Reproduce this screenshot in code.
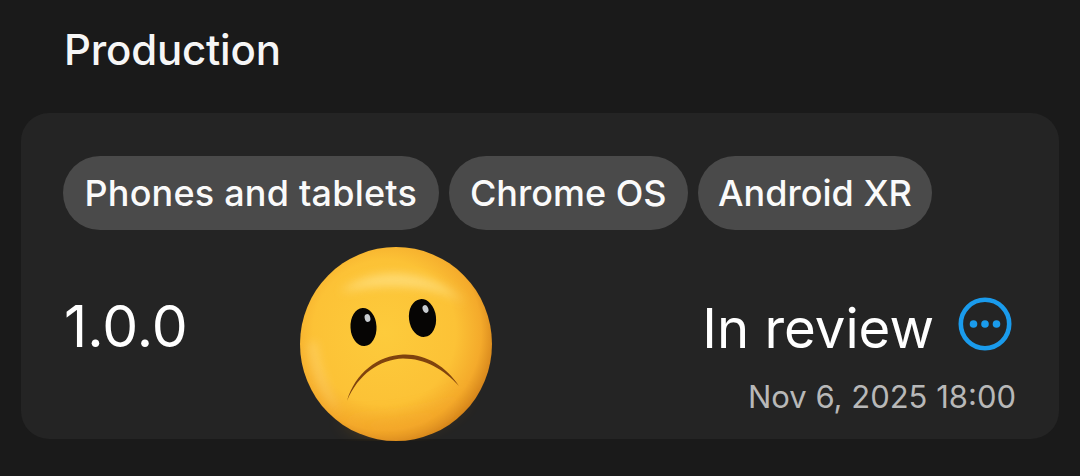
<div class="page">
  <h1 class="title">Production</h1>
  <section class="card">
    <div class="chips">
      <span class="chip chip-a">Phones and tablets</span>
      <span class="chip chip-b">Chrome OS</span>
      <span class="chip chip-c">Android XR</span>
    </div>
    <div class="row">
      <span class="version">1.0.0</span>
      <div class="status">
        <div class="status-line">
          <span class="status-text">In review</span>
          <svg class="dots" viewBox="0 0 54 54" width="54" height="54" aria-hidden="true">
            <circle cx="27" cy="27" r="24.2" fill="none" stroke="#1a9bec" stroke-width="4.6" />
            <circle cx="15.5" cy="27" r="3.8" fill="#1a9bec" />
            <circle cx="27" cy="27" r="3.8" fill="#1a9bec" />
            <circle cx="38.5" cy="27" r="3.8" fill="#1a9bec" />
          </svg>
        </div>
        <span class="date">Nov 6, 2025 18:00</span>
      </div>
    </div>
    <svg class="emoji" viewBox="0 0 194 194" width="194" height="194" aria-hidden="true">
      <defs>
        <radialGradient id="face" cx="44%" cy="44%" r="60%">
          <stop offset="0" stop-color="#fdcb3c" />
          <stop offset="0.62" stop-color="#fcc236" />
          <stop offset="0.84" stop-color="#f4aa2b" />
          <stop offset="1" stop-color="#cf7d18" />
        </radialGradient>
        <filter id="soft" x="-30%" y="-30%" width="160%" height="160%">
          <feGaussianBlur stdDeviation="5" />
        </filter>
        <filter id="softer" x="-30%" y="-30%" width="160%" height="160%">
          <feGaussianBlur stdDeviation="9" />
        </filter>
      </defs>
      <ellipse cx="96" cy="97" rx="96" ry="97" fill="url(#face)" />
      <path d="M40 45 C70 20 125 18 165 55 C130 36 80 36 40 45Z" fill="#ffe48c" opacity="0.7" filter="url(#soft)" />
      <path d="M8 95 C10 125 22 150 40 166 C30 145 20 122 17 95Z" fill="#ffdd95" opacity="0.35" filter="url(#soft)" />
      <path d="M40 172 C75 192 130 190 170 145 C140 168 85 178 40 172Z" fill="#f19f20" opacity="0.5" filter="url(#softer)" />
      <ellipse cx="63.500" cy="80" rx="13" ry="19" transform="rotate(-3 63.500 80)" fill="#060504" />
      <ellipse cx="67.500" cy="71" rx="2.800" ry="4" transform="rotate(-15 67.500 71)" fill="#c8ccd0" />
      <ellipse cx="122.500" cy="71" rx="13.500" ry="19" transform="rotate(-7 122.500 71)" fill="#060504" />
      <ellipse cx="125.500" cy="62" rx="2.800" ry="4" transform="rotate(-20 125.500 62)" fill="#c8ccd0" />
      <path d="M47 154 C55 126 78 108.500 103 107.500 C125 106.500 146 119 159 139 C144 122.500 125 111.500 103 111.500 C80 112.500 58 127 47 154Z" fill="#7f430e" />
    </svg>
  </section>
</div>

<style>
  :global(body) {
    margin: 0;
    background: #1a1a1a;
  }

  .page {
    height: 476px;
    padding: 22px 21px 0;
    box-sizing: border-box;
    font-family: Inter, Roboto, sans-serif;
    color: #fff;
    overflow: hidden;
  }

  .title {
    margin: 0 0 37px 43px;
    font-size: 42px;
    line-height: 55px;
    height: 54px;
    font-weight: 500;
    color: #f6f6f6;
    letter-spacing: -0.2px;
  }

  .card {
    position: relative;
    height: 326px;
    padding: 43px 42px 0;
    box-sizing: border-box;
    background: #242424;
    border-radius: 28px;
  }

  .chips {
    display: flex;
    gap: 10.5px;
  }

  .chip {
    height: 74px;
    display: flex;
    align-items: center;
    justify-content: center;
    border-radius: 37px;
    background: #4a4a4a;
    box-sizing: border-box;
    font-size: 36px;
    font-weight: 500;
    color: #fafafa;
    white-space: nowrap;
  }

  .chip-a { width: 375.5px; letter-spacing: 0.2px; }
  .chip-b { width: 238.5px; }
  .chip-c { width: 234px; }

  .row {
    display: flex;
    justify-content: space-between;
    align-items: flex-start;
    margin-top: 58px;
  }

  .version {
    margin-left: 1px;
    padding-top: 1px;
    font-size: 57px;
    line-height: 76px;
    color: #fff;
  }

  .status {
    display: flex;
    flex-direction: column;
    align-items: flex-end;
    margin-right: 1px;
  }

  .status-line {
    display: flex;
    align-items: center;
    gap: 24px;
    height: 76px;
    margin-right: 4px;
  }

  .status-text {
    padding-top: 3px;
    font-size: 54.5px;
    color: #fff;
  }

  .dots {
    align-self: flex-start;
    margin-top: 9px;
  }

  .date {
    margin-top: 13px;
    font-size: 31px;
    line-height: 40px;
    color: #b8b8b8;
  }

  .emoji {
    position: absolute;
    left: 279px;
    top: 134px;
  }
</style>
